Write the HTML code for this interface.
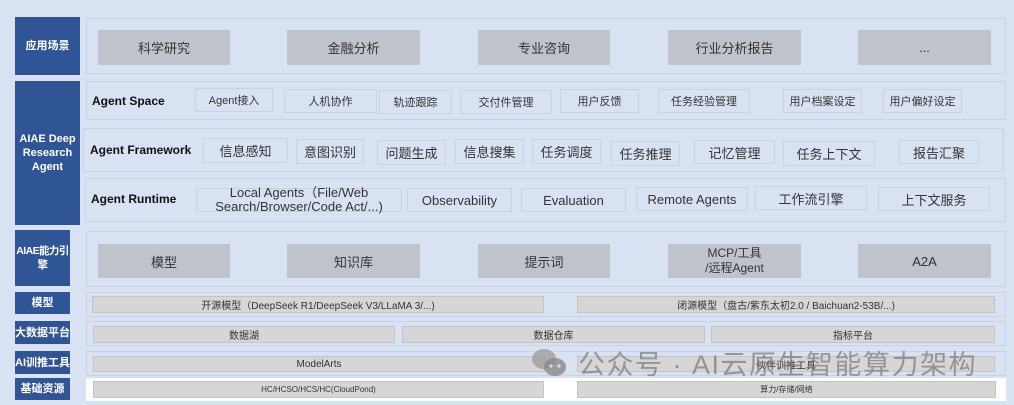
<!DOCTYPE html>
<html><head><meta charset="utf-8"><style>
*{margin:0;padding:0;box-sizing:border-box}
body{width:1014px;height:405px;background:#d9e2f2;position:relative;overflow:hidden;font-family:"Liberation Sans","Noto Sans CJK SC",sans-serif;color:#222}
.a{position:absolute;display:flex;align-items:center;justify-content:center;text-align:center}
.l{background:#2f5597;color:#fff;font-weight:bold;font-size:11px;line-height:14px}
.p{position:absolute;border:1.5px solid #c9d2e2}
.g{background:#bfc3cb;font-size:13px;color:#333}
.b{border:1px solid #c9d2e2;font-size:11px;color:#333}
.f{border:1px solid #c9d2e2;font-size:13px;color:#333}
.h{font-weight:bold;font-size:12px;color:#111;justify-content:flex-start}
.s{background:#d6d6d6;border:1px solid #c4c4c4;font-size:10px;color:#333}
</style></head><body>
<div class="a l" style="left:15px;top:17px;width:65px;height:58px">应用场景</div>
<div class="a l" style="left:15px;top:81px;width:65px;height:144px">AIAE Deep<br>Research<br>Agent</div>
<div class="a l" style="left:15px;top:230px;width:55px;height:56px;font-size:10.5px;letter-spacing:-0.6px;white-space:nowrap">AIAE能力引<br>擎</div>
<div class="a l" style="left:15px;top:292px;width:55px;height:22px">模型</div>
<div class="a l" style="left:15px;top:321px;width:55px;height:23px">大数据平台</div>
<div class="a l" style="left:15px;top:351px;width:55px;height:23px">AI训推工具</div>
<div class="a l" style="left:15px;top:378px;width:55px;height:22px">基础资源</div>

<div class="p" style="left:86px;top:18px;width:920px;height:56px"></div>
<div class="a g" style="left:98px;top:30px;width:132px;height:35px">科学研究</div>
<div class="a g" style="left:287px;top:30px;width:133px;height:35px">金融分析</div>
<div class="a g" style="left:478px;top:30px;width:132px;height:35px">专业咨询</div>
<div class="a g" style="left:668px;top:30px;width:133px;height:35px">行业分析报告</div>
<div class="a g" style="left:858px;top:30px;width:133px;height:35px">...</div>

<div class="p" style="left:86px;top:81px;width:920px;height:39px"></div>
<div class="a h" style="left:92px;top:91px;width:100px;height:20px">Agent Space</div>
<div class="a b" style="left:195px;top:88px;width:78px;height:24px">Agent接入</div>
<div class="a b" style="left:284px;top:89px;width:93px;height:24px">人机协作</div>
<div class="a b" style="left:379px;top:90px;width:73px;height:24px">轨迹跟踪</div>
<div class="a b" style="left:460px;top:90px;width:92px;height:24px">交付件管理</div>
<div class="a b" style="left:560px;top:89px;width:79px;height:24px">用户反馈</div>
<div class="a b" style="left:658px;top:89px;width:92px;height:24px">任务经验管理</div>
<div class="a b" style="left:783px;top:89px;width:79px;height:24px">用户档案设定</div>
<div class="a b" style="left:883px;top:89px;width:79px;height:24px">用户偏好设定</div>

<div class="p" style="left:83px;top:128px;width:921px;height:44px"></div>
<div class="a h" style="left:90px;top:140px;width:110px;height:20px">Agent Framework</div>
<div class="a f" style="left:203px;top:138px;width:85px;height:25px">信息感知</div>
<div class="a f" style="left:296px;top:139px;width:68px;height:25px">意图识别</div>
<div class="a f" style="left:377px;top:140px;width:69px;height:25px">问题生成</div>
<div class="a f" style="left:455px;top:139px;width:69px;height:25px">信息搜集</div>
<div class="a f" style="left:532px;top:139px;width:69px;height:25px">任务调度</div>
<div class="a f" style="left:611px;top:141px;width:69px;height:25px">任务推理</div>
<div class="a f" style="left:694px;top:140px;width:81px;height:24px">记忆管理</div>
<div class="a f" style="left:783px;top:141px;width:92px;height:25px">任务上下文</div>
<div class="a f" style="left:899px;top:140px;width:80px;height:24px">报告汇聚</div>

<div class="p" style="left:85px;top:178px;width:921px;height:44px"></div>
<div class="a h" style="left:91px;top:189px;width:100px;height:20px">Agent Runtime</div>
<div class="a f" style="left:196px;top:188px;width:206px;height:24px;line-height:14px">Local Agents（File/Web<br>Search/Browser/Code Act/...)</div>
<div class="a f" style="left:407px;top:188px;width:105px;height:24px">Observability</div>
<div class="a f" style="left:521px;top:188px;width:105px;height:24px">Evaluation</div>
<div class="a f" style="left:636px;top:187px;width:112px;height:24px">Remote Agents</div>
<div class="a f" style="left:755px;top:186px;width:112px;height:24px">工作流引擎</div>
<div class="a f" style="left:878px;top:187px;width:112px;height:24px">上下文服务</div>

<div class="p" style="left:86px;top:231px;width:920px;height:56px"></div>
<div class="a g" style="left:98px;top:244px;width:132px;height:34px">模型</div>
<div class="a g" style="left:287px;top:244px;width:133px;height:34px">知识库</div>
<div class="a g" style="left:478px;top:244px;width:132px;height:34px">提示词</div>
<div class="a g" style="left:668px;top:244px;width:133px;height:34px;font-size:12px;line-height:15px">MCP/工具<br>/远程Agent</div>
<div class="a g" style="left:858px;top:244px;width:133px;height:34px">A2A</div>

<div class="p" style="left:86px;top:292px;width:920px;height:25px"></div>
<div class="a s" style="left:92px;top:296px;width:452px;height:17px">开源模型（DeepSeek R1/DeepSeek V3/LLaMA 3/...)</div>
<div class="a s" style="left:577px;top:296px;width:418px;height:17px">闭源模型（盘古/紫东太初2.0 / Baichuan2-53B/...)</div>

<div class="p" style="left:86px;top:321px;width:920px;height:25px"></div>
<div class="a s" style="left:93px;top:326px;width:302px;height:17px">数据湖</div>
<div class="a s" style="left:402px;top:326px;width:303px;height:17px">数据仓库</div>
<div class="a s" style="left:711px;top:326px;width:284px;height:17px">指标平台</div>

<div class="p" style="left:86px;top:351px;width:920px;height:25px"></div>
<div class="a s" style="left:93px;top:356px;width:452px;height:16px">ModelArts</div>
<div class="a s" style="left:577px;top:356px;width:418px;height:16px">伙伴训推工具</div>

<div style="position:absolute;left:86px;top:378px;width:920px;height:23px;background:#fff"></div>
<div class="a s" style="left:93px;top:381px;width:451px;height:17px;font-size:8px">HC/HCSO/HCS/HC(CloudPond)</div>
<div class="a s" style="left:577px;top:381px;width:419px;height:17px;font-size:8px">算力/存储/网络</div>

<svg style="position:absolute;left:530px;top:347px" width="40" height="32" viewBox="0 0 40 32">
<ellipse cx="14" cy="12" rx="12" ry="10" fill="#9a9a9a" opacity=".75"/>
<ellipse cx="25" cy="20" rx="11" ry="9" fill="#8a8a8a" opacity=".8"/>
<circle cx="21" cy="19" r="1.6" fill="#ddd"/><circle cx="29" cy="19" r="1.6" fill="#ddd"/>
</svg>
<div style="position:absolute;left:578px;top:343px;font-size:27px;color:rgba(120,120,120,.7);white-space:nowrap;letter-spacing:1.5px">公众号 · AI云原生智能算力架构</div>
</body></html>
